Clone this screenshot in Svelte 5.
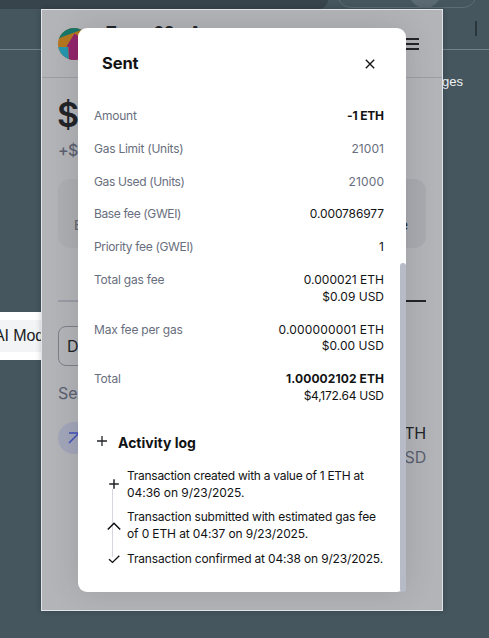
<script>
  const rows = [
    { label: 'Amount', ls: -0.24, lines: [{ t: '-1 ETH', bold: true, ls: -0.2 }] },
    { label: 'Gas Limit (Units)', ls: -0.25, lines: [{ t: '21001', muted: true, ls: 0.08 }] },
    { label: 'Gas Used (Units)', ls: -0.35, lines: [{ t: '21000', muted: true, ls: 0.15 }] },
    { label: 'Base fee (GWEI)', ls: -0.38, lines: [{ t: '0.000786977', ls: -0.12 }] },
    { label: 'Priority fee (GWEI)', ls: -0.34, lines: [{ t: '1', ls: 0 }] },
    { label: 'Total gas fee', ls: -0.2, lines: [{ t: '0.000021 ETH', ls: 0 }, { t: '$0.09 USD', ls: 0 }] },
    { label: 'Max fee per gas', ls: -0.2, lines: [{ t: '0.000000001 ETH', ls: 0.17 }, { t: '$0.00 USD', ls: 0.04 }] },
    { label: 'Total', ls: -0.2, lines: [{ t: '1.00002102 ETH', bold: true, ls: 0.1 }, { t: '$4,172.64 USD', ls: -0.26 }] }
  ];
  const log = [
    { icon: 'plus', lines: [['Transaction created with a value of 1 ETH at', -0.27], ['04:36 on 9/23/2025.', -0.04]] },
    { icon: 'up', lines: [['Transaction submitted with estimated gas fee', -0.19], ['of 0 ETH at 04:37 on 9/23/2025.', -0.12]] },
    { icon: 'check', lines: [['Transaction confirmed at 04:38 on 9/23/2025.', -0.17]] }
  ];
</script>

<div class="desktop">
  <div class="browser">
    <div class="tabs">
      <span class="activetab"></span>
      <span class="omni"><i></i></span>
    </div>
    <div class="toolbar"><i></i></div>
    <div class="links">ges</div>
  </div>
  <div class="aimode"><span>AI Mod</span></div>

  <section class="wallet">
    <header>
      <svg class="avatar" width="32" height="32" viewBox="0 0 32 32">
        <defs><clipPath id="round"><circle cx="16" cy="16" r="16" /></clipPath></defs>
        <g clip-path="url(#round)">
          <rect width="32" height="32" fill="#b5761f" />
          <path d="M0 0H32V0L23 2L4 9L0 11Z" fill="#18766a" />
          <path d="M0 19L10 19L11 32H0Z" fill="#2796ae" />
          <path d="M8.5 18.5L16.5 5.5L32 16V32H11L10.5 19Z" fill="#92266b" />
        </g>
      </svg>
      <strong>Temp 02 - A</strong>
      <svg class="burger" width="16" height="16" viewBox="0 0 16 16"><path d="M0 3H15M0 8H15M0 13H15" stroke="#222428" stroke-width="2" /></svg>
    </header>
    <div class="body">
      <div class="balance">$</div>
      <div class="change">+$</div>
      <div class="actions"><div>Buy</div><div class="right">Bridge</div></div>
      <div class="tabline"><i></i><i class="on"></i></div>
      <div class="filter">D</div>
      <div class="date">Sep</div>
      <div class="activity">
        <span class="badge"><svg width="16" height="16" viewBox="0 0 16 16"><path d="M3 3H13V14M13 3L3 13" fill="none" stroke="#4150bd" stroke-width="1.5" /></svg></span>
        <div class="sum"><b>-1 ETH</b><span>-$4,172.55 USD</span></div>
      </div>
    </div>
  </section>

  <section class="modal">
    <div class="title">
      <h1>Sent</h1>
      <svg width="10" height="10" viewBox="0 0 10 10"><path d="M.8 .8L9.2 9.2M9.2 .8L.8 9.2" stroke="#121314" stroke-width="1.35" /></svg>
    </div>
    <div class="rows">
      {#each rows as r}
        <div class="row">
          <span class="label" style="letter-spacing:{r.ls}px">{r.label}</span>
          <div class="vals">
            {#each r.lines as l}
              <span class:bold={l.bold} class:muted={l.muted} style="letter-spacing:{l.ls}px;margin-right:{-l.ls}px">{l.t}</span>
            {/each}
          </div>
        </div>
      {/each}
    </div>
    <div class="loghead">
      <svg width="10" height="10" viewBox="0 0 10 10"><path d="M5 0V10M0 5H10" stroke="#222428" stroke-width="1.3" /></svg>
      <h2>Activity log</h2>
    </div>
    <div class="log">
      <i class="line"></i>
      {#each log as e}
        <div class="entry">
          <span class="ico">
            {#if e.icon === 'plus'}
              <svg width="14" height="14" viewBox="0 0 14 14"><path d="M7 1.2V10.8M2.2 6H11.8" stroke="#222428" stroke-width="1.5" /></svg>
            {:else if e.icon === 'up'}
              <svg width="14" height="14" viewBox="0 0 14 14"><path d="M.8 10.5L7 4.3L13.2 10.5" fill="none" stroke="#121314" stroke-width="1.6" /></svg>
            {:else}
              <svg width="14" height="14" viewBox="0 0 14 14"><path d="M2 7.2L5.5 10.4L12.3 3.7" fill="none" stroke="#121314" stroke-width="1.4" /></svg>
            {/if}
          </span>
          <div>
            {#each e.lines as l}<p style="letter-spacing:{l[1]}px">{l[0]}</p>{/each}
          </div>
        </div>
      {/each}
    </div>
    <i class="thumb"></i>
  </section>
</div>

<style>
  .desktop { position: relative; width: 489px; height: 638px; overflow: hidden; background: #45565f; font-family: Inter, "Liberation Sans", sans-serif; color: #121314; }
  .tabs { height: 9px; position: relative; overflow: hidden; }
  .activetab { display: block; width: 328px; height: 9px; background: #38444b; border-bottom-right-radius: 12px 12px; }
  .omni { position: absolute; left: 337px; top: -20px; width: 140px; height: 28px; box-sizing: border-box; border: 1px solid #5d6d75; border-radius: 14px; }
  .omni i { position: absolute; right: 35px; top: -5px; width: 32px; height: 32px; border-radius: 50%; background: #5b6a72; }
  .toolbar { height: 40px; border-bottom: 1px solid #72818a; display: flex; justify-content: flex-end; padding-right: 12px; }
  .toolbar i { width: 2px; height: 15px; margin-top: 12px; background: #29363c; }
  .links { padding: 24px 26px 0 0; text-align: right; color: #f0f2f3; font: 13px/16px "Liberation Sans", sans-serif; }
  .aimode { position: absolute; left: 0; top: 312px; width: 50px; height: 48px; box-sizing: border-box; padding: 8px 0; background: #fff; overflow: hidden; }
  .aimode span { display: block; height: 32px; margin-left: -7px; padding-left: 1px; background: #f3f4f6; font: 16px/31px "Liberation Sans", sans-serif; letter-spacing: -.1px; white-space: nowrap; color: #202124; }

  .wallet { position: absolute; left: 41px; top: 9px; width: 402px; height: 602px; box-sizing: border-box; border: 1px solid #e1e5e8; background: #b3b4b8; overflow: hidden; box-shadow: 0 0 6px rgba(0,0,0,.2); }
  header { height: 49px; border-bottom: 1px solid #9c9ea4; display: flex; padding: 18px 22px 0 16px; }
  header strong { margin-left: 16px; margin-top: -8px; font-size: 16px; line-height: 24px; color: #222428; }
  .burger { margin-left: auto; margin-top: 8px; }
  .body { padding: 16px 16px 0; }
  .balance { height: 42px; font-size: 34px; line-height: 42px; font-weight: 600; color: #222428; margin-left: -1px; }
  .change { height: 24px; margin-top: 2px; font-size: 16px; line-height: 24px; font-weight: 500; letter-spacing: -.8px; color: #5b6070; }
  .actions { display: flex; justify-content: space-between; margin-top: 17px; }
  .actions div { width: 86px; height: 69px; box-sizing: border-box; border-radius: 12px; background: #adaeb2; padding: 37px 16px 0; font-size: 13px; line-height: 18px; font-weight: 500; color: #67696e; }
  .actions .right { text-align: right; padding-right: 18px; background: #a8aaaf; color: #222428; }
  .tabline { display: flex; margin-top: 52px; }
  .tabline i { flex: 1; height: 2px; background: #999ba5; }
  .tabline .on { background: #222428; }
  .filter { width: 100px; height: 40px; margin-top: 24px; box-sizing: border-box; border: 1px solid #7d7f89; border-radius: 8px; padding-left: 8px; font-size: 16px; line-height: 38px; color: #222428; }
  .date { margin-top: 15px; height: 24px; font-size: 16px; line-height: 24px; color: #5b6070; }
  .activity { display: flex; justify-content: space-between; margin-top: 17px; }
  .badge { width: 32px; height: 32px; border-radius: 50%; background: #a2a6b9; display: flex; align-items: center; justify-content: center; }
  .sum { display: flex; flex-direction: column; text-align: right; font-size: 16px; line-height: 23.5px; color: #5b6070; letter-spacing: -.2px; }
  .sum b { font-weight: 400; color: #222428; }

  .modal { position: absolute; left: 78px; top: 28px; width: 328px; height: 564px; border-radius: 9px; background: #fff; box-shadow: 0 0 32px rgba(0,0,0,.12); clip-path: inset(-18px -36px -18px -36px); }
  .title { height: 70px; display: flex; align-items: center; justify-content: space-between; padding: 0 31px 0 24px; }
  h1 { margin: 0; font-size: 16.5px; line-height: 24px; font-weight: 700; letter-spacing: -.1px; }
  .title svg { margin-top: 2px; }
  .rows { margin: 10px 22px 0 16px; display: flex; flex-direction: column; gap: 16px; font-size: 12px; line-height: 16.8px; }
  .row { display: flex; justify-content: space-between; white-space: nowrap; }
  .label, .muted { color: #686e7d; }
  .vals { display: flex; flex-direction: column; align-items: flex-end; }
  .bold { font-weight: 700; }
  .loghead { height: 24px; margin-top: 26px; padding-left: 19px; display: flex; align-items: center; gap: 11px; }
  .loghead svg { margin-top: -4px; }
  h2 { margin: 0; font-size: 14px; line-height: 24px; font-weight: 700; letter-spacing: 0; }
  .log { position: relative; margin-top: 13px; padding-left: 29px; display: flex; flex-direction: column; gap: 8px; font-size: 12px; line-height: 16.8px; }
  .line { position: absolute; left: 34px; top: 21px; width: 1px; height: 68px; background: #d5d7de; }
  .entry { position: relative; display: flex; align-items: center; gap: 6px; white-space: nowrap; }
  .ico { display: flex; }
  p { margin: 0; }
  .thumb { position: absolute; right: 0; top: 235px; width: 6px; height: 329px; border-radius: 4px; background: #b7bbc8; }
</style>
